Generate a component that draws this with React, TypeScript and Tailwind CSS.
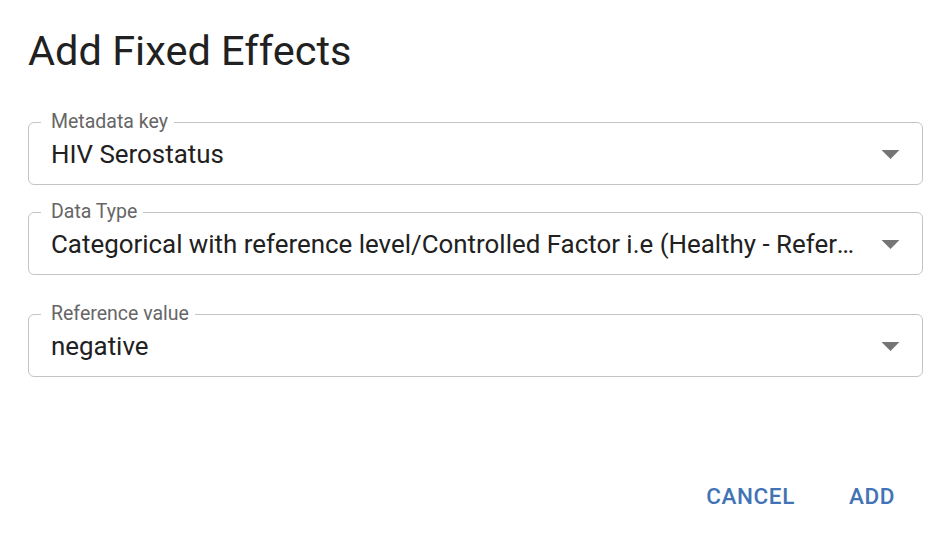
import React from "react";

function Arrow() {
  return (
    <svg viewBox="0 0 24 24" className="w-[43px] h-[43px] shrink-0 mr-[10px] ml-[4px]" fill="#757575">
      <path d="M7 10l5 5 5-5z" />
    </svg>
  );
}

function Field({ label, value, className = "" }: { label: string; value: string; className?: string }) {
  return (
    <div className={"relative h-[63px] border border-[#c4c4c4] rounded-[6px] flex items-center " + className}>
      <span className="absolute top-[-11px] left-[12px] bg-white pl-[10px] pr-[6px] text-[19.5px] leading-none text-[#666666]">
        {label}
      </span>
      <div className="flex-1 min-w-0 truncate pl-[22px] pt-[2px] text-[25.9px] leading-[32px] text-[#212121]">{value}</div>
      <Arrow />
    </div>
  );
}

export default function App() {
  return (
    <div
      className="w-[948px] h-[556px] bg-white overflow-hidden flex flex-col"
      style={{ fontFamily: "Roboto, 'Liberation Sans', sans-serif" }}
    >
      <h1 className="pl-[28px] pt-[26px] text-[41.5px] leading-[1.2] text-[#212121] font-normal">Add Fixed Effects</h1>
      <div className="pl-[28px] pr-[25px] mt-[46px] flex flex-col">
        <Field label="Metadata key" value="HIV Serostatus" />
        <Field
          className="mt-[27px]"
          label="Data Type"
          value="Categorical with reference level/Controlled Factor i.e (Healthy - Reference vs Diseased)"
        />
        <Field className="mt-[39px]" label="Reference value" value="negative" />
      </div>
      <div className="mt-auto mb-[41px] flex justify-end items-center gap-[28px] pr-[40px]">
        <button className="px-[13px] py-[8px] text-[22.5px] font-medium tracking-[0.6px] text-[#4274b5] leading-none">
          CANCEL
        </button>
        <button className="px-[13px] py-[8px] text-[22.5px] font-medium tracking-[0.6px] text-[#4274b5] leading-none">
          ADD
        </button>
      </div>
    </div>
  );
}
